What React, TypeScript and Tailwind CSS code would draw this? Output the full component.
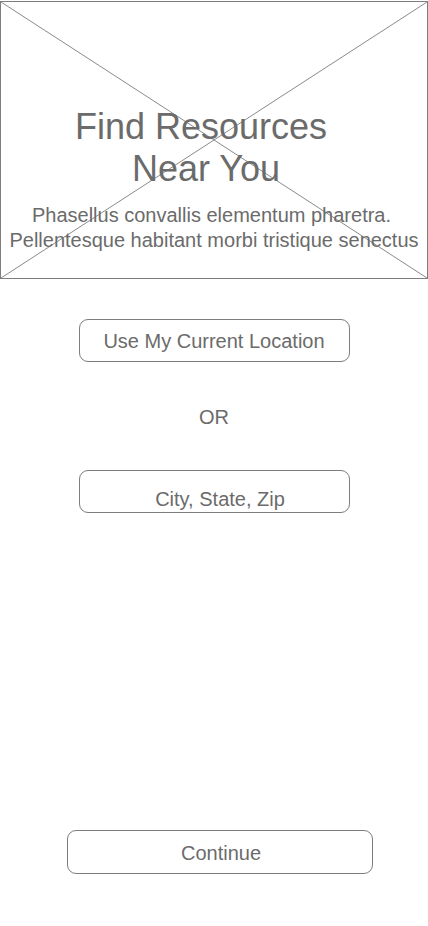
export default function App() {
  return (
    <div className="min-h-[926px] w-[428px] bg-white font-['Liberation_Sans',Arial,sans-serif] text-[#6b6b6b]">
      {/* hero placeholder */}
      <div className="relative mt-px h-[278px] w-[428px] border border-[#7d7d7d] pt-[104px]">
        <svg
          className="absolute inset-0 h-full w-full"
          viewBox="0 0 426 276"
          preserveAspectRatio="none"
        >
          <line x1="0" y1="0" x2="426" y2="276" stroke="#8a8a8a" strokeWidth="1" />
          <line x1="426" y1="0" x2="0" y2="276" stroke="#8a8a8a" strokeWidth="1" />
        </svg>
        <div className="relative text-center">
          <h1 className="text-[36px] leading-[42px] font-normal">
            <span className="block pr-[26px]">Find Resources</span>
            <span className="block pr-[16px]">Near You</span>
          </h1>
          <p className="mt-[13px] text-[20px] leading-[25px]">
            <span className="block pr-[5px]">Phasellus convallis elementum pharetra.</span>
            <span className="block">Pellentesque habitant morbi tristique senectus</span>
          </p>
        </div>
      </div>

      <div className="flex flex-col">
        <button className="mx-auto mt-[40px] flex h-[43px] w-[271px] items-center justify-center rounded-[9px] border border-[#7d7d7d] text-[20px]">
          Use My Current Location
        </button>

        <div className="mt-[43px] text-center text-[20px] leading-[24px]">OR</div>

        <div className="mx-auto mt-[41px] flex h-[43px] w-[271px] items-center justify-center rounded-[9px] border border-[#7d7d7d] pl-[12px] pt-[14px] text-[20px]">
          City, State, Zip
        </div>

        <button className="ml-[67px] mt-[317px] flex h-[44px] w-[306px] items-center justify-center rounded-[9px] border border-[#7d7d7d] pl-[2px] pt-[2px] text-[20px]">
          Continue
        </button>
      </div>
    </div>
  );
}
